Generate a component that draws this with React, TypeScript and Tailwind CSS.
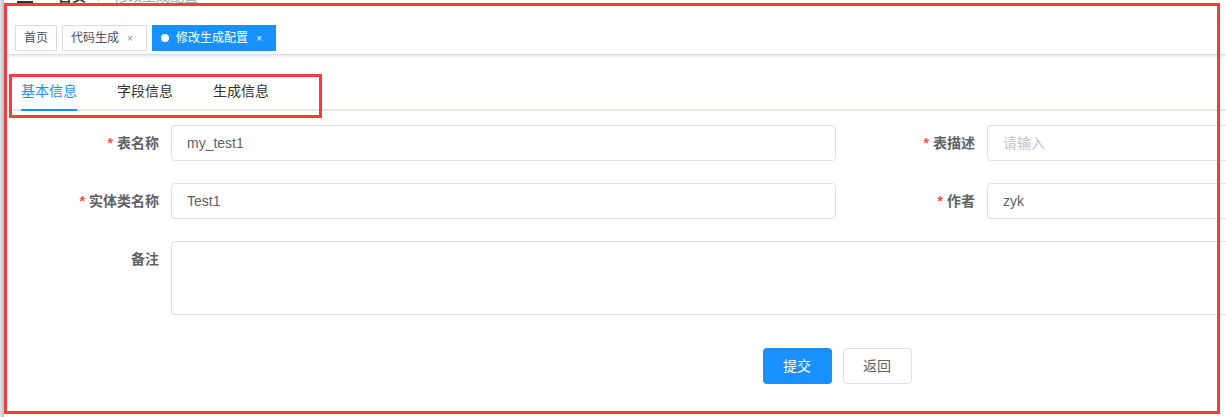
import React from "react";

const font = "font-['Liberation_Sans','Noto_Sans_CJK_SC',sans-serif]";

function Label({ text, required }: { text: string; required?: boolean }) {
  return (
    <label className="w-[150px] shrink-0 pr-3 text-right text-[14px] font-bold leading-[36px] text-[#606266]">
      {required && <span className="mr-1 text-[#ff4949]">*</span>}
      {text}
    </label>
  );
}

function Field({
  label,
  value,
  placeholder,
  required,
}: {
  label: string;
  value?: string;
  placeholder?: string;
  required?: boolean;
}) {
  return (
    <div className="mb-[22px] flex">
      <Label text={label} required={required} />
      <input
        readOnly
        value={value ?? ""}
        placeholder={placeholder}
        className="h-9 flex-1 rounded border border-[#dcdfe6] bg-white px-[15px] text-[14px] text-[#606266] outline-none placeholder:text-[#c0c4cc]"
      />
    </div>
  );
}

function Tag({ text, active, closable, first }: { text: string; active?: boolean; closable?: boolean; first?: boolean }) {
  return (
    <div
      className={`mt-1 flex h-[26px] items-center border px-2 text-[12px] ${first ? "ml-[15px]" : "ml-[5px]"} ${
        active ? "border-[#1890ff] bg-[#1890ff] text-white" : "border-[#d8dce5] bg-white text-[#495060]"
      }`}
    >
      {active && <span className="mr-[7px] h-2 w-2 rounded-full bg-white" />}
      <span>{text}</span>
      {closable && (
        <span className={`ml-[3px] flex w-4 justify-center text-[10px] ${active ? "text-white" : "text-[#8a9099]"}`}>×</span>
      )}
    </div>
  );
}

export default function App() {
  const tabs = ["基本信息", "字段信息", "生成信息"];
  return (
    <div className={`relative h-[417px] w-[1226px] overflow-hidden bg-white ${font}`}>
      {/* navbar, mostly scrolled out of view */}
      <div className="-mt-[29px] flex h-[50px] items-center bg-white shadow-[0_1px_4px_rgba(0,21,41,0.08)]">
        <div className="px-[15px]">
          <svg width="20" height="20" viewBox="0 0 20 20" fill="#303133">
            <rect x="2" y="3" width="16" height="2" />
            <rect x="2" y="9" width="16" height="2" />
            <rect x="2" y="15" width="16" height="2" />
          </svg>
        </div>
        <div className="ml-2 flex items-center gap-3 text-[14px]">
          <span className="font-bold text-[#303133]">首页</span>
          <span className="text-[#c0c4cc]">/</span>
          <span className="text-[#97a8be]">修改生成配置</span>
        </div>
      </div>

      {/* tags view */}
      <div className="flex h-[34px] w-full items-start border-b border-[#d8dce5] bg-white shadow-[0_1px_3px_0_rgba(0,0,0,0.12)]">
        <Tag text="首页" first />
        <Tag text="代码生成" closable />
        <Tag text="修改生成配置" closable active />
      </div>

      {/* main */}
      <div className="w-[1660px] pl-[21px] pt-4">
        <div className="relative flex h-10 items-center">
          <div className="absolute inset-x-[-21px] bottom-0 h-[2px] bg-[#e4e7ed]" />
          {tabs.map((t, i) => (
            <div
              key={t}
              className={`relative flex h-10 items-center text-[14px] ${i === 0 ? "pr-5 text-[#1890ff]" : "px-5 text-[#303133]"}`}
            >
              {t}
              {i === 0 && <span className="absolute bottom-0 left-0 right-5 h-[2px] bg-[#1890ff]" />}
            </div>
          ))}
        </div>

        <div className="mt-[14px] grid w-[1632px] grid-cols-2">
          <div className="pr-px">
            <Field label="表名称" value="my_test1" required />
          </div>
          <Field label="表描述" placeholder="请输入" required />
          <div className="pr-px">
            <Field label="实体类名称" value="Test1" required />
          </div>
          <Field label="作者" value="zyk" required />

          <div className="col-span-2 mb-[22px] flex">
            <Label text="备注" />
            <textarea
              readOnly
              className="h-[74px] flex-1 resize-none rounded border border-[#dcdfe6] px-[15px] py-[5px] text-[14px] text-[#606266] outline-none"
            />
          </div>

          <div className="col-span-2 flex justify-center gap-[11px] pt-[11px]">
            <button className="h-9 w-[69px] rounded bg-[#1890ff] text-[14px] text-white">提交</button>
            <button className="h-9 w-[69px] rounded border border-[#dcdfe6] bg-white text-[14px] text-[#606266]">返回</button>
          </div>
        </div>
      </div>

      {/* sidebar edge shadow */}
      <div className="absolute left-0 top-0 h-full w-1 bg-gradient-to-r from-[#e2e4e8] to-[#b9bdc5]" />

      {/* annotation boxes */}
      <div className="pointer-events-none absolute left-1 top-[3px] h-[411px] w-[1216px] border-[3px] border-[#f33c3c]" />
      <div className="pointer-events-none absolute left-[9px] top-[74px] h-[44px] w-[313px] border-[3px] border-[#f33c3c]" />
    </div>
  );
}
